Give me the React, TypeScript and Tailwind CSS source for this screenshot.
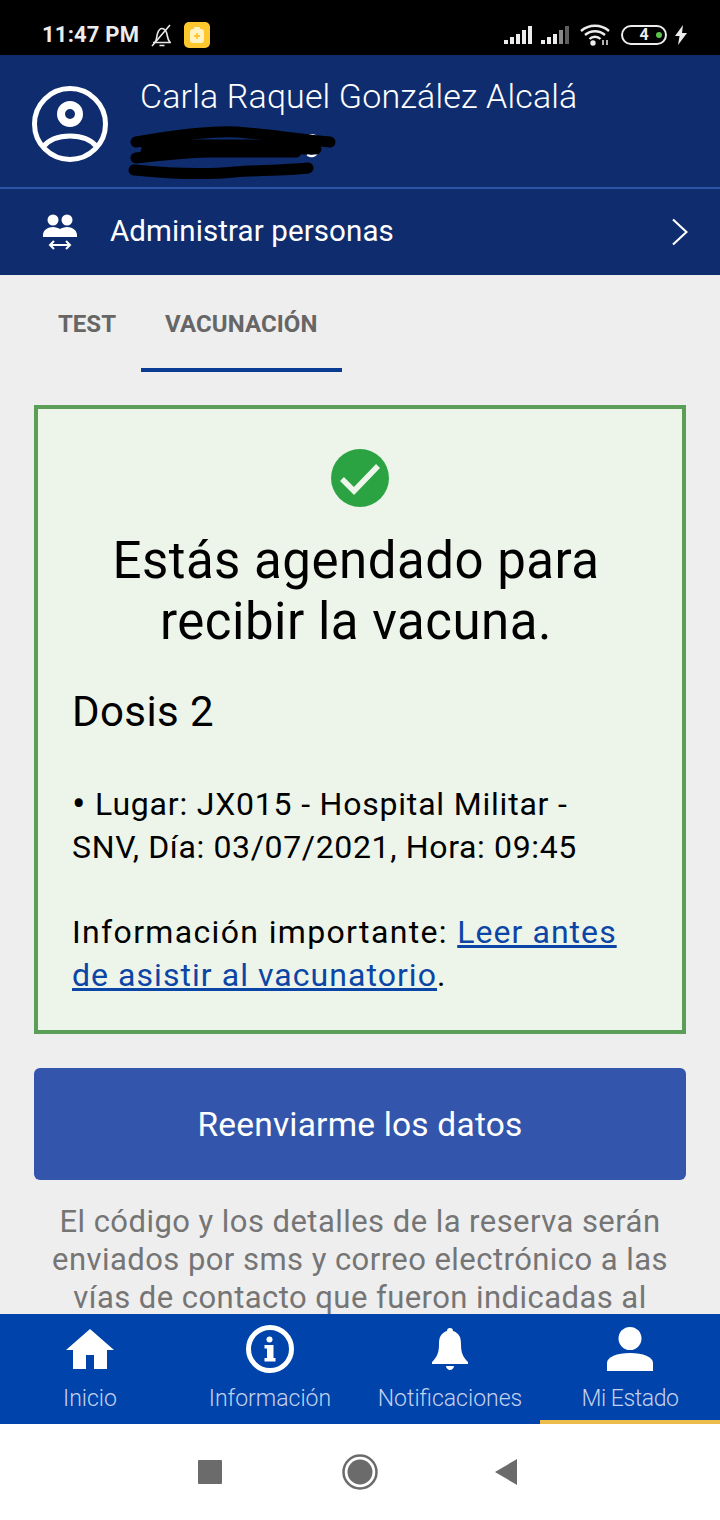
function StatusBar() {
  return (
    <div className="flex h-[55px] shrink-0 items-center justify-between bg-black pl-[42px] pr-[33px] pt-[20px] pb-[6px] text-[#ececec]">
      <div className="flex items-center">
        <span className="text-[22px] leading-none font-bold font-['Roboto',sans-serif] tracking-[0.2px]">11:47 PM</span>
        <svg className="ml-[11px]" width="24" height="26" viewBox="0 0 24 26" fill="none" stroke="#e8e8e8" strokeWidth="1.6">
          <path d="M3 20.5h18M5 20.5c2-3 1.5-6 2.5-9 1-3 3-5 4.5-5s3.5 1.500 4.500 4c1 3 .8 7 3.500 10" />
          <path d="M9.500 23.500h5M2 24 20 3" />
        </svg>
        <div className="ml-[10px] flex h-[26px] w-[26px] items-center justify-center rounded-[5px] bg-[#fdc82e]">
          <svg width="16" height="18" viewBox="0 0 16 18">
            <rect x="1" y="3" width="14" height="14" rx="3" fill="#fff3c4" />
            <rect x="5" y="1" width="6" height="3" rx="1" fill="#fff3c4" />
            <path d="M8 7v6M5 10h6" stroke="#fdc82e" strokeWidth="1.800" />
          </svg>
        </div>
      </div>
      <div className="flex items-center">
        <svg width="28" height="20" viewBox="0 0 28 20" fill="#ececec">
          <rect x="0" y="15" width="4" height="4" />
          <rect x="6" y="12" width="4" height="7" />
          <rect x="12" y="9" width="4" height="10" />
          <rect x="18" y="5" width="4" height="14" />
          <rect x="24" y="1" width="4" height="18" />
        </svg>
        <svg className="ml-[9px]" width="28" height="20" viewBox="0 0 28 20" fill="#ececec">
          <rect x="0" y="15" width="4" height="4" />
          <rect x="6" y="12" width="4" height="7" />
          <rect x="12" y="9" width="4" height="10" />
          <rect x="18" y="5" width="4" height="14" fill="#8a8a8a" />
          <rect x="24" y="1" width="4" height="18" fill="#5e5e5e" />
        </svg>
        <svg className="ml-[11px]" width="30" height="22" viewBox="0 0 30 22" fill="none" stroke="#ececec" strokeWidth="2.400">
          <path d="M1 7c8-7 20-7 28 0M5 11c6-5 14-5 20 0M9.500 15c3-3 8-3 11 0" />
          <circle cx="13" cy="19" r="1.500" fill="#ececec" />
          <path d="M23 16v5M27 16v5" strokeWidth="1.500" />
        </svg>
        <div className="relative ml-[11px] flex h-[20px] w-[46px] items-center justify-center rounded-full border-2 border-[#ececec]">
          <span className="text-[16px] leading-none font-bold font-['Roboto',sans-serif]">4</span>
          <span className="absolute right-[3px] top-[5px] h-[6px] w-[6px] rounded-full bg-[#5cc24a]" />
        </div>
        <svg className="ml-[8px]" width="12" height="20" viewBox="0 0 12 20" fill="#ececec">
          <path d="M8 0 0 11h4.500L3 20l9-12H7z" />
        </svg>
      </div>
    </div>
  );
}

function ProfileHeader() {
  return (
    <div className="relative flex h-[132px] shrink-0 bg-[#0f2d6e] pl-[32px] pt-[31px]">
      <svg width="76" height="76" viewBox="0 0 76 76" fill="none" stroke="#fff">
        <circle cx="38" cy="38" r="35.500" strokeWidth="5" />
        <circle cx="38" cy="28" r="9" strokeWidth="8" />
        <path d="M11 61C18 52 28 50 38 50s20 2 27 11" strokeWidth="5" />
      </svg>
      <div className="ml-[32px] -mt-[10px] text-[34px] leading-[40px] font-light tracking-[0.15px] text-white font-['Roboto',sans-serif]">Carla Raquel González Alcalá</div>
      {/* scribbled-out phone number */}
      <svg className="absolute left-[126px] top-[68px]" width="212" height="58" viewBox="0 0 212 58" fill="none" stroke="#000" strokeWidth="11" strokeLinecap="round">
        <path d="M182 14c3-3 9-2 9 2s-4 5-5 6c4 0 6 3 5 7s-6 5-9 3" stroke="#fff" strokeWidth="2.500" />
        <path d="M10 19C50 12 90 8 110 9c30 2 60 7 94 10" />
        <path d="M10 35c40-5 110-10 180-9" />
        <path d="M8 47c40 4 70 5 100 2 30-2 60-2 74-4" />
        <path d="M20 22h160M20 29h150" />
      </svg>
    </div>
  );
}

function TabsBar() {
  return (
    <div className="flex h-[97px] shrink-0 bg-[#eeeeee] font-['Roboto',sans-serif] text-[24px] font-bold text-[#666666]">
      <div className="w-[141px] pl-[58px] pt-[35px] leading-[28px]">TEST</div>
      <div className="h-[97px] w-[201px] border-b-[4px] border-[#0b3c93] pl-[24px] pt-[35px] leading-[28px] tracking-[0.1px]">VACUNACIÓN</div>
    </div>
  );
}

function NavItem({ label, active, children }: { label: string; active?: boolean; children: React.ReactNode }) {
  return (
    <div className={`flex flex-1 flex-col items-center ${active ? "border-b-[4px] border-[#ecbc4b] tracking-[-0.4px]" : "border-b-[4px] border-transparent"}`}>
      <div className="flex h-[50px] items-center">{children}</div>
      <span className="mt-[10px] text-[23px] leading-[30px] font-light text-[#c3d1ee]">{label}</span>
    </div>
  );
}

export default function App() {
  return (
    <div className="flex h-[1520px] w-[720px] flex-col overflow-hidden bg-white font-['Roboto',sans-serif]">
      <StatusBar />
      <ProfileHeader />
      <div className="h-[2px] shrink-0 bg-[#2f55a8]" />
      <div className="flex h-[86px] shrink-0 items-center bg-[#0f2d6e] pl-[43px] pr-[32px] text-white">
        <svg width="34" height="36" viewBox="0 0 34 36" fill="#fff">
          <circle cx="10" cy="6" r="5.500" />
          <circle cx="24" cy="6" r="5.500" />
          <path d="M0 21c0-5 5-8 10-8 3 0 5 1 7 2 2-1 4-2 7-2 5 0 10 3 10 8v2H0z" />
          <path d="M8 31h18" stroke="#fff" strokeWidth="2" />
          <path d="M11 27 7 31l4 4M23 27l4 4-4 4" fill="none" stroke="#fff" strokeWidth="2" />
        </svg>
        <span className="ml-[33px] flex-1 text-[29.5px] leading-none tracking-[0.1px]">Administrar personas</span>
        <svg width="16" height="28" viewBox="0 0 16 28" fill="none" stroke="#fff" strokeWidth="2.200">
          <path d="M1 1.500 14.500 14 1 26.500" />
        </svg>
      </div>
      <TabsBar />
      <div className="flex-1 overflow-hidden bg-[#eeeeee] px-[34px] pt-[33px]">
        <div className="h-[629px] border-[4px] border-[#5b9e58] bg-[#edf5ea] px-[34px] pt-[40px] text-black">
          <svg className="mx-auto" width="58" height="58" viewBox="0 0 58 58">
            <circle cx="29" cy="29" r="29" fill="#2ba343" />
            <path d="M11 30 23 42 47 17" fill="none" stroke="#eef6ec" strokeWidth="5.500" />
          </svg>
          <h1 className="-ml-[14px] -mr-[6px] mt-[23px] text-center text-[51px] leading-[61px] tracking-[0.5px]">
            Estás agendado para<br />recibir la vacuna.
          </h1>
          <h2 className="mt-[34px] text-[42px] leading-[52px] tracking-[0.4px]">Dosis 2</h2>
          <p className="mt-[45px] text-[32px] leading-[42.5px]">
            <span className="tracking-[0.8px]"><span className="inline-block translate-y-[3px] text-[40px] leading-[0]">•</span> Lugar: JX015 - Hospital Militar -</span><br />
            <span className="tracking-[0.65px]">SNV, Día: 03/07/2021, Hora: 09:45</span>
          </p>
          <p className="mt-[43px] text-[32px] leading-[42.5px]">
            <span className="tracking-[1.35px]">Información importante: </span>
            <span className="text-[#0b45a5] underline tracking-[1.05px]">Leer antes<br />de asistir al vacunatorio</span>.
          </p>
        </div>
        <div className="mt-[34px] flex h-[112px] items-center justify-center rounded-[6px] bg-[#3356ac] pt-[3px] text-[33.5px] text-white tracking-[0.2px]">
          Reenviarme los datos
        </div>
        <p className="-mx-[10px] mt-[23px] text-center text-[31px] leading-[38px] text-[#757575] tracking-[0.45px]">
          El código y los detalles de la reserva serán<br />enviados por sms y correo electrónico a las<br />vías de contacto que fueron indicadas al
        </p>
      </div>
      <div className="flex h-[110px] shrink-0 bg-[#0043aa] pt-[10px]">
        <NavItem label="Inicio">
          <svg width="48" height="40" viewBox="0 0 48 40" fill="#fff">
            <path d="M24 0 48 21H41V40H28V26H20V40H7V21H0z" />
          </svg>
        </NavItem>
        <NavItem label="Información">
          <svg width="48" height="48" viewBox="0 0 48 48">
            <circle cx="24" cy="24" r="21.500" fill="none" stroke="#fff" strokeWidth="5" />
            <circle cx="23.500" cy="14.500" r="3" fill="#fff" />
            <path d="M18.500 20h9v13h2v3.500h-11V33h2.500v-9.500h-2.500z" fill="#fff" />
          </svg>
        </NavItem>
        <NavItem label="Notificaciones">
          <svg width="36" height="42" viewBox="0 0 36 42" fill="#fff">
            <path d="M18 0c2 0 3 1 3 3 6 2 8 6 8 13 0 9 2 13 7 18v2H0v-2c5-5 7-9 7-18 0-7 2-11 8-13 0-2 1-3 3-3z" />
            <path d="M14 38h8c0 2-2 4-4 4s-4-2-4-4z" />
          </svg>
        </NavItem>
        <NavItem label="Mi Estado" active>
          <svg width="46" height="44" viewBox="0 0 46 44" fill="#fff">
            <ellipse cx="23" cy="11.500" rx="11.500" ry="11.500" />
            <path d="M0 44V36C0 30 10 26 23 26s23 4 23 10v8z" />
          </svg>
        </NavItem>
      </div>
      <div className="flex h-[96px] shrink-0 items-center bg-white pl-[198px]">
        <div className="h-[24px] w-[24px] rounded-[1px] bg-[#6b6b6b]" />
        <svg className="ml-[120px]" width="36" height="36" viewBox="0 0 36 36">
          <circle cx="18" cy="18" r="16.500" fill="none" stroke="#6b6b6b" strokeWidth="2.500" />
          <circle cx="18" cy="18" r="12.500" fill="#6b6b6b" />
        </svg>
        <svg className="ml-[116px]" width="24" height="26" viewBox="0 0 24 26" fill="#6b6b6b">
          <path d="M23 0v26L1 13z" />
        </svg>
      </div>
    </div>
  );
}
